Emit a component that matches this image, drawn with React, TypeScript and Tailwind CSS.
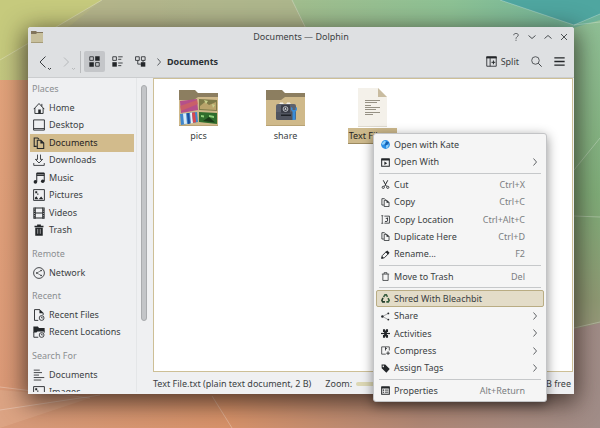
import type { ReactNode } from "react";
import clsx from "clsx";

const icons: Record<string, ReactNode> = {
  home: (
    <>
      <path d="M1 9.5 8 2l7 7.5M2.5 8v7.3h11V8M11.8 6V2.5" fill="none" stroke="currentColor" strokeWidth="1.2" />
      <path d="M7 10h3.4v5.5H7z" fill="currentColor" />
    </>
  ),
  desktop: <path d="M.8 1.2h14.4v13.6H.8zM.8 12.8h14.4" fill="none" stroke="currentColor" strokeWidth="1.2" />,
  documents: (
    <>
      <path d="M5 12.5H1.6V1.2h4.6l2 2" fill="none" stroke="currentColor" strokeWidth="1.4" />
      <path d="M5.7 4.2h4.8l3.8 3.8v7.2H5.7z" fill="none" stroke="currentColor" strokeWidth="1.4" />
      <path d="M9.8 3.6v5h5z" fill="currentColor" />
    </>
  ),
  downloads: (
    <path d="M6 .8v6.4H3.2L8 12l4.8-4.8H10V.8M1 12v3.2h14V12" fill="none" stroke="currentColor" strokeWidth="1.1" />
  ),
  music: (
    <>
      <path d="M5 13V1.5h10V12M5 4.6h10" fill="none" stroke="currentColor" strokeWidth="1.3" />
      <path d="M5 1h10v2.4H5z" fill="currentColor" />
      <circle cx="3.2" cy="13.2" r="2.4" fill="currentColor" />
      <circle cx="13" cy="12.4" r="2.4" fill="currentColor" />
    </>
  ),
  pictures: (
    <>
      <path d="M.8.8h14.4v14.4H.8z" fill="none" stroke="currentColor" strokeWidth="1.2" />
      <path d="M2.5 13.6v-2l2-2 2.6 4zM7.5 13.6l3.4-3.6 2.8 3.6z" fill="currentColor" />
      <path d="M3 3h2.6v2.6H3zM5.6 6h1.6v1.6H5.6z" fill="currentColor" />
    </>
  ),
  videos: (
    <>
      <path d="M.5.5h3.2v15H.5zM12.3.5h3.2v15h-3.2z" fill="currentColor" />
      <path d="M3 1.3h10M3 8h10M3 14.7h10" stroke="currentColor" strokeWidth="1.5" />
      <path d="M2.1 2v12.5M13.9 2v12.5" stroke="#eff0f1" strokeWidth=".9" strokeDasharray="1.3 1.7" />
    </>
  ),
  trash: (
    <>
      <path d="M2 2.3h3.5V.5h5v1.8H14v2H2zM3 5h10v10.5H3z" fill="currentColor" />
      <path d="M6.3 6.5V13M9.7 6.5V13" stroke="#eff0f1" strokeWidth=".8" />
    </>
  ),
  network: (
    <>
      <circle cx="8" cy="8" r="7.2" fill="none" stroke="currentColor" strokeWidth="1.1" />
      <path d="M10.8 4.8 5 8l5.800 3.200" fill="none" stroke="currentColor" strokeWidth=".7" />
      <circle cx="5" cy="8" r="1.1" fill="currentColor" />
      <circle cx="10.8" cy="4.8" r="1" fill="currentColor" />
      <circle cx="10.8" cy="11.2" r="1" fill="currentColor" />
    </>
  ),
  recentFiles: (
    <>
      <path d="M7 15.2H2V.8h7l4.5 4.5V8" fill="none" stroke="currentColor" strokeWidth="1.2" />
      <path d="M8.600.5v5.200h5.300z" fill="currentColor" />
      <circle cx="11.5" cy="12" r="3.200" fill="none" stroke="currentColor" strokeWidth="1.1" />
      <path d="M11.5 10.200V12H13" fill="none" stroke="currentColor" />
    </>
  ),
  recentLocations: (
    <>
      <path d="M.5.8h6l1.500 2h7.500v4.400H6L4.500 8.700h-4z" fill="currentColor" />
      <path d="M1.100 8v7H7M14.900 6v3" fill="none" stroke="currentColor" strokeWidth="1.2" />
      <circle cx="11.5" cy="12" r="3.200" fill="none" stroke="currentColor" strokeWidth="1.1" />
      <path d="M11.5 10.200V12H13" fill="none" stroke="currentColor" />
    </>
  ),
  lines: <path d="M1 1.500h8M1 4.800h11M1 8.100h7M1 11.400h14M1 14.700h10" stroke="currentColor" strokeWidth="1.1" />,
  openWith: (
    <>
      <path d="M1.200 2h13.600v12.500H1.200z" fill="none" stroke="currentColor" strokeWidth="1.8" />
      <path d="M1 1h14v3.600H1zM6 6.200l5 3.200-5 3.200z" fill="currentColor" />
    </>
  ),
  cut: (
    <>
      <path d="M4 .5l5.800 11M12 .5 6.200 11.500" stroke="currentColor" strokeWidth="1.7" />
      <circle cx="4" cy="13" r="2" fill="none" stroke="currentColor" strokeWidth="1.5" />
      <circle cx="12" cy="13" r="2" fill="none" stroke="currentColor" strokeWidth="1.5" />
    </>
  ),
  copyLocation: (
    <>
      <path d="M.5 1.200h3.500M2.300 1.200v13.600M.5 14.800h3.500" fill="none" stroke="currentColor" strokeWidth="1.2" />
      <path d="M6 2h9v12.500H6" fill="none" stroke="currentColor" strokeWidth="1.4" />
      <path d="M11.500 4.500v6.500M8.500 6h3M7 11.500h4" fill="none" stroke="currentColor" strokeWidth="1.5" />
    </>
  ),
  rename: (
    <>
      <path d="M1 15l1.200-5L9 3.200 12.800 7 6 13.800z" fill="none" stroke="currentColor" strokeWidth="1.6" />
      <path d="M8 3.500 11.200.8l4 4L12.500 8zM1 15l.8-4 3.200 3.200z" fill="currentColor" />
    </>
  ),
  trashOutline: (
    <path d="M1.500 3.700h13M5.500 3.500V1.200h5v2.300M3.300 4v11h9.400V4" fill="none" stroke="currentColor" strokeWidth="1.3" />
  ),
  recycle: (
    <>
      <path d="M4.500 5.500 7 1.500h2.500l2 3.500" fill="none" stroke="#3c5f43" strokeWidth="2.800" />
      <path d="M3.500 7 1.500 11.500 3 14h4" fill="none" stroke="#233c2b" strokeWidth="2.800" />
      <path d="M9.500 14H13l1.500-2.800L12.500 7.500" fill="none" stroke="#2f5a3a" strokeWidth="2.800" />
    </>
  ),
  share: (
    <>
      <circle cx="2.500" cy="8" r="2.200" fill="currentColor" />
      <circle cx="13" cy="2.500" r="1.700" fill="currentColor" />
      <circle cx="13" cy="13.500" r="1.700" fill="currentColor" />
      <path d="M4 7.200 12 3M4 8.800 12 13" stroke="currentColor" strokeWidth=".7" />
    </>
  ),
  activities: (
    <>
      <path d="M3.500.5h3.700v2h1.600v-2h3.700v5h-9zM3.500 10.500h9v5H8.800v-2H7.200v2H3.500z" fill="currentColor" />
      <path d="M0 8h16" stroke="currentColor" strokeWidth="2.200" />
      <path d="M8 5v6" stroke="currentColor" strokeWidth="5" />
    </>
  ),
  compress: (
    <>
      <path d="M8.500 14.500H1.200V1.500h13.600V8" fill="none" stroke="currentColor" strokeWidth="1.3" />
      <path d="M8 2v6M8 4.500h2.500M12.500 9.500v6.500M9.300 12.800h6.500" stroke="currentColor" strokeWidth="1.5" />
    </>
  ),
  tag: <path d="M1 1h6.500L15.500 9 9.500 15.500 1.200 7.500zM4 2.800a1.300 1.300 0 1 0 .1 0z" fill="currentColor" fillRule="evenodd" />,
  properties: (
    <>
      <path d="M1.200 2h13.600v12.500H1.200z" fill="none" stroke="currentColor" strokeWidth="1.8" />
      <path d="M1 1h14v3.500H1zM3.200 6.300h2.300v2H3.200zM3.200 10h2.300v2H3.200z" fill="currentColor" />
      <path d="M7 7.300h6M7 11h6" stroke="currentColor" strokeWidth="1.5" />
    </>
  ),
  kate: (
    <>
      <circle cx="8" cy="8" r="7.800" fill="#2b8fe6" />
      <path d="M1 6 6 1.200 9 3 6.500 7 3 9zM9 9l5-1-1.500 5L9 14.500z" fill="#8ed0fb" />
      <path d="M9 3l5.500 1-4 5-4 1z" fill="#175fae" />
    </>
  ),
  viewIcons: (
    <>
      <path d="M9 .5h6.500V7H9zM.5 9H7v6.500H.5z" fill="currentColor" />
      <path d="M1.100 1.100h5.300v5.300H1.100zM9.600 9.600h5.300v5.300H9.600z" fill="none" stroke="currentColor" strokeWidth="1.2" />
    </>
  ),
  viewCompact: (
    <>
      <path d="M.5 9H7v6.500H.5z" fill="currentColor" />
      <path d="M1.100 1.100h5.300v5.300H1.100zM9 1.200h6.500M9 4.800h4.500M9 10.200h6.500M9 14h4.500" fill="none" stroke="currentColor" strokeWidth="1.2" />
    </>
  ),
  viewTree: (
    <>
      <path d="M8.500 9H15v6.500H8.500z" fill="currentColor" />
      <path d="M.8 1.100h5.400v5.300H.8zM9.300 1.100h5.400v5.300H9.300zM11.700 6.500V9M4 6.500v5.300h4.500" fill="none" stroke="currentColor" strokeWidth="1.2" />
    </>
  ),
  split: (
    <>
      <path d="M1.100 1.500h13.800v13.400H1.100zM6 3v12" fill="none" stroke="currentColor" strokeWidth="1.2" />
      <path d="M.5.5h15v3H.5z" fill="currentColor" />
      <path d="M8 9.200h5.500M10.800 6.500V12" stroke="currentColor" strokeWidth="1.4" />
    </>
  ),
  search: (
    <>
      <circle cx="6.500" cy="6.500" r="5.500" fill="none" stroke="currentColor" strokeWidth="1.2" />
      <path d="m10.500 10.500 5 5" stroke="currentColor" strokeWidth="1.4" />
    </>
  ),
  hamburger: <path d="M.5 2.700h15M.5 8h15M.5 13.300h15" stroke="currentColor" strokeWidth="2" />,
  help: (
    <>
      <path d="M3.500 4.500C3.500 2 5.500.8 8 .8s4.500 1.200 4.500 3.700C12.500 7.300 8 7.500 8 11.500" fill="none" stroke="currentColor" strokeWidth="1.6" />
      <path d="M8 13.500v2" stroke="currentColor" strokeWidth="1.8" />
    </>
  ),
  down: <path d="m1 5 7 6 7-6" fill="none" stroke="currentColor" strokeWidth="1.800" />,
  up: <path d="m1 11 7-6 7 6" fill="none" stroke="currentColor" strokeWidth="1.800" />,
  close: <path d="m2 2 12 12m0-12-12 12" stroke="currentColor" strokeWidth="1.800" />,
  right: <path d="m5 1 6 7-6 7" fill="none" stroke="currentColor" strokeWidth="1.6" />,
};

function Icon({ name, className }: { name: string; className: string }) {
  return (
    <svg viewBox="0 0 16 16" className={clsx("shrink-0", className)} aria-hidden="true">
      {icons[name]}
    </svg>
  );
}

function Wallpaper() {
  return (
    <svg
      viewBox="0 0 600 428"
      preserveAspectRatio="none"
      className="absolute inset-0 -z-10 size-full"
      aria-hidden="true"
    >
      <defs>
        <linearGradient id="top" x1="0" x2="1" y1="0" y2="0">
          <stop offset="0" stopColor="#c3c77f" />
          <stop offset=".16" stopColor="#b9b98a" />
          <stop offset=".5" stopColor="#a0bd8e" />
          <stop offset=".75" stopColor="#8dc194" />
          <stop offset="1" stopColor="#6db49c" />
        </linearGradient>
        <linearGradient id="left" x1="0" x2="0" y1="0" y2="1">
          <stop offset="0" stopColor="#e2a37b" />
          <stop offset="1" stopColor="#dc9a77" />
        </linearGradient>
        <linearGradient id="right" x1="0" x2="0" y1="0" y2="1">
          <stop offset="0" stopColor="#90c096" />
          <stop offset=".5" stopColor="#7fac78" />
          <stop offset=".8" stopColor="#8f9a74" />
          <stop offset="1" stopColor="#a39a84" />
        </linearGradient>
        <linearGradient id="bottom" x1="0" x2="1" y1="0" y2="0">
          <stop offset="0" stopColor="#d79b7a" />
          <stop offset=".38" stopColor="#d8936a" />
          <stop offset=".7" stopColor="#b08876" />
          <stop offset="1" stopColor="#a18d88" />
        </linearGradient>
      </defs>
      <path d="M0 0h600v428H0z" fill="url(#bottom)" />
      <path d="M0 60h200v330H0z" fill="url(#left)" />
      <path d="M400 20h200v303L400 370z" fill="url(#right)" />
      <path d="M0 0h600v20L400 80H0z" fill="url(#top)" />
      <path d="M0 0h102L0 60z" fill="#c6ca7d" />
      <path d="M102 0h190l25 50H40z" fill="#b2b38b" opacity=".7" />
      <path d="M500 0h100v14l-26 11z" fill="#4fa6a0" />
      <path d="M0 390l90 8-90 30z" fill="#e0aa8b" opacity=".6" />
      <path
        d="M102 0 0 60M292 0l22 45M500 0l74 25 26-11M574 25l26-3M574 170l26-32M574 216l26 1M574 328l26-6M0 387l90 11M0 410l100-15M212 396l20 32"
        fill="none"
        stroke="#fff"
        strokeOpacity=".28"
      />
    </svg>
  );
}

function PlaceGroup({
  title,
  rows,
  places,
}: {
  title: string;
  rows: string;
  places: { label: string; icon: string; selected?: boolean }[];
}) {
  return (
    <section className="mb-[5px] shrink-0">
      <h2 className="flex h-5 items-center pl-1 text-[#8b8e91]">{title}</h2>
      <ul className={clsx("grid auto-rows-fr", rows)}>
        {places.map((place) => (
          <li key={place.label} className="mx-0.5 min-h-0">
            <a
              href="#"
              className={clsx(
                "flex h-full items-center gap-1 pl-[3px]",
                place.selected && "bg-[#d2bb8c] text-[#26241f]"
              )}
            >
              <Icon name={place.icon} className="size-3 text-[#232629]" />
              {place.label}
            </a>
          </li>
        ))}
      </ul>
    </section>
  );
}

function Folder({ children }: { children: ReactNode }) {
  return (
    <svg viewBox="0 0 39 36" className="h-9 w-[39px]" aria-hidden="true">
      <path d="M0 0h16l3 3h20v12H0z" fill="#8c7e60" />
      <path d="M0 10h15l4-3h20v29H0z" fill="#cfb98a" />
      <path d="M0 35h39v1H0z" fill="#b8a274" />
      {children}
    </svg>
  );
}

function PicsIcon() {
  return (
    <Folder>
      <path d="m1 11 17-2 1 11-17 3z" fill="#b5508a" />
      <path d="m20 9 18 1v11l-18-1z" fill="#7d7a48" />
      <path d="m1 24 17-2 1 10-17 3z" fill="#3f86cc" />
      <path d="m20 22 18 1v11l-18-2z" fill="#2f6d2c" />
      <path d="m1 16 17-6 1 4-17 7z" fill="#d1655b" opacity=".7" />
      <path d="m21 16 5-4 4 3 7-3v8l-16-1z" fill="#b9a46b" />
      <path d="m25 10 4 1-2 3zM33 14l3 1-2 3z" fill="#c7cf8c" />
      <path d="m4 23.600 3-.4 1 10.500-3 .4z" fill="#d7ebf7" />
      <path d="m8 23.200 2-.3 1 10.600-2 .4z" fill="#1b4d9c" />
      <path d="m11 23 2-.4 1 10.400-2 .4z" fill="#e9eef5" />
      <path d="m13 22.700 3-.4 1 10-3 .5z" fill="#d8484d" />
      <path d="m22 25 3 .5v2l-3-.5zM30 25l5 1v2l-5-1z" fill="#8fd07a" />
      <path d="m24 31 6-4 6 5.500z" fill="#1b3b1a" />
    </Folder>
  );
}

function ShareIcon() {
  return (
    <Folder>
      <path d="M14 14v-1h3v1M21 14v-1h3v1" fill="#f4f1e8" stroke="#f4f1e8" />
      <rect x="10" y="14" width="20" height="16" rx="2" fill="#5d616d" />
      <path d="M10 22h20v6a2 2 0 0 1-2 2H12a2 2 0 0 1-2-2z" fill="#50545f" />
      <rect x="15" y="15" width="9" height="8" rx="1" fill="#3a3d47" />
      <circle cx="19.500" cy="19" r="2.400" fill="none" stroke="#d9dce0" strokeWidth=".8" />
      <path d="m19.500 17.200 1.200 2.600h-2.400z" fill="#d9dce0" />
      <path d="M15 24.500h10V26H15z" fill="#1f2228" />
      <path d="M25 17v3l1.500 1.500V30h3v-8.500L31 20v-3l-1.500 1v2h-3v-2z" fill="#3b8dd8" />
    </Folder>
  );
}

function TextFileIcon() {
  return (
    <svg viewBox="0 0 29 39" className="h-[39px] w-[29px]" aria-hidden="true">
      <path d="M0 0h20l9 9v30H0z" fill="#f4f1ea" />
      <path d="M20 0v9h9z" fill="#c9bca0" />
      <path d="M0 38.500h29" stroke="#dedacf" />
      <path
        d="M7 12.500h15M7 14.500h12M7 17.500h6M7 19.500h15M7 21.500h11M7 24.500h15M7 26.500h8"
        stroke="#7d786a"
        strokeWidth=".8"
      />
    </svg>
  );
}

function FileItem({ name, icon, selected }: { name: string; icon: ReactNode; selected?: boolean }) {
  return (
    <li className="flex w-[87px] flex-col items-center">
      <div className="flex h-[41px] items-center">{icon}</div>
      <span
        className={clsx(
          "h-4 px-px leading-4",
          selected && "border-b border-[#9c8a60] bg-[#cdb98c] text-[#26241f]"
        )}
      >
        {name}
      </span>
    </li>
  );
}

type MenuEntry = { label: string; icon: string; shortcut?: string; submenu?: boolean; active?: boolean };

const menuGroups: { rows: string; entries: MenuEntry[] }[] = [
  {
    rows: "h-[35px]",
    entries: [
      { label: "Open with Kate", icon: "kate" },
      { label: "Open With", icon: "openWith", submenu: true },
    ],
  },
  {
    rows: "h-[87px]",
    entries: [
      { label: "Cut", icon: "cut", shortcut: "Ctrl+X" },
      { label: "Copy", icon: "documents", shortcut: "Ctrl+C" },
      { label: "Copy Location", icon: "copyLocation", shortcut: "Ctrl+Alt+C" },
      { label: "Duplicate Here", icon: "documents", shortcut: "Ctrl+D" },
      { label: "Rename...", icon: "rename", shortcut: "F2" },
    ],
  },
  { rows: "h-[17px]", entries: [{ label: "Move to Trash", icon: "trashOutline", shortcut: "Del" }] },
  {
    rows: "h-[87px]",
    entries: [
      { label: "Shred With Bleachbit", icon: "recycle", active: true },
      { label: "Share", icon: "share", submenu: true },
      { label: "Activities", icon: "activities", submenu: true },
      { label: "Compress", icon: "compress", submenu: true },
      { label: "Assign Tags", icon: "tag", submenu: true },
    ],
  },
  { rows: "h-[17px]", entries: [{ label: "Properties", icon: "properties", shortcut: "Alt+Return" }] },
];

function ContextMenu() {
  return (
    <div
      role="menu"
      className="absolute left-[373px] top-[133px] w-[174px] rounded-[3px] border border-[#c3c4c6] bg-[#f5f5f5] p-0.5 shadow-[0_3px_12px_rgba(0,0,0,0.45)]"
    >
      {menuGroups.map((group, i) => (
        <div key={i}>
          {i > 0 && (
            <div role="separator" className="mx-[3px] flex h-[5px] items-center">
              <div className="h-px w-full bg-[#c6c8ca]" />
            </div>
          )}
          <div className={clsx("grid auto-rows-fr", group.rows)}>
            {group.entries.map((entry) => (
              <button
                key={entry.label}
                type="button"
                role="menuitem"
                className={clsx(
                  "flex min-h-0 w-full items-center rounded-[2px] border pl-1 text-left",
                  entry.active ? "border-[#b9ac83] bg-[#e3dcc8]" : "border-transparent"
                )}
              >
                <Icon name={entry.icon} className="size-[9px] text-[#232629]" />
                <span className="ml-1 flex-1 whitespace-nowrap">{entry.label}</span>
                {entry.shortcut && <span className="mr-[18px] text-[#7b7e81]">{entry.shortcut}</span>}
                {entry.submenu && <Icon name="right" className="mr-1 size-2" />}
              </button>
            ))}
          </div>
        </div>
      ))}
    </div>
  );
}

function NavButton({ label, disabled, d }: { label: string; disabled?: boolean; d: string }) {
  return (
    <button type="button" aria-label={label} disabled={disabled} className="text-[#3b3f43] disabled:text-[#b6b9bb]">
      <svg viewBox="0 0 16 16" className="size-4" fill="none" stroke="currentColor" aria-hidden="true">
        <path d={d} />
        <path d="m11 14 1.500 1.500L14 14" />
      </svg>
    </button>
  );
}

export default function App() {
  return (
    <div className="relative isolate flex h-screen overflow-hidden pb-[34px] pl-7 pr-[26px] pt-[27px] font-['Noto_Sans',sans-serif] text-[9px] leading-4 text-[#3b3f43]">
      <Wallpaper />
      <main className="flex min-w-0 flex-1 flex-col rounded-t-[3px] bg-[#eff0f2] shadow-[0_6px_24px_3px_rgba(30,20,15,0.7)]">
        <header className="rounded-t-[3px] border-b border-[#cbcdcf] bg-[#dee0e2] pb-px">
          <div className="grid h-5 grid-cols-[1fr_auto_1fr] items-center px-0.5">
            <svg viewBox="0 0 12 12" className="ml-px size-3" aria-hidden="true">
              <path d="M0 0h5l1 1h6v5H0z" fill="#82755c" />
              <path d="M0 3h5l1-1h6v10H0z" fill="#c8c09d" />
              <path d="M0 11h12v1H0z" fill="#a69c78" />
            </svg>
            <h1>Documents — Dolphin</h1>
            <div className="flex justify-end">
              {["help", "down", "up", "close"].map((name) => (
                <button key={name} type="button" aria-label={name} className="flex w-4 justify-center">
                  <Icon name={name} className="size-2" />
                </button>
              ))}
            </div>
          </div>
          <div className="flex h-[29px] items-center px-[9px]">
            <div className="flex gap-2">
              <NavButton label="Back" d="M8.500 2.500 3 8l5.500 5.500" />
              <NavButton label="Forward" disabled d="M3 3.500 7.500 8 3 12.500" />
            </div>
            <div className="mx-[3px] h-[22px] w-px bg-[#b9bbbd]" />
            <div className="flex gap-0.5">
              <button type="button" aria-label="Icons" className="flex size-[21px] items-center justify-center rounded-[2px] bg-[#c4c6c9]">
                <Icon name="viewIcons" className="size-[11px] text-[#232629]" />
              </button>
              <button type="button" aria-label="Compact" className="flex size-[21px] items-center justify-center">
                <Icon name="viewCompact" className="size-[11px] text-[#232629]" />
              </button>
              <button type="button" aria-label="Details" className="flex size-[21px] items-center justify-center">
                <Icon name="viewTree" className="size-[11px] text-[#232629]" />
              </button>
            </div>
            <nav className="ml-1 flex items-center gap-1">
              <Icon name="right" className="size-2" />
              <a href="#" className="font-bold text-[#2c3034]">
                Documents
              </a>
            </nav>
            <div className="ml-auto flex items-center gap-3">
              <button type="button" className="flex items-center gap-1">
                <Icon name="split" className="size-[11px] text-[#232629]" />
                Split
              </button>
              <button type="button" aria-label="Search">
                <Icon name="search" className="size-[11px]" />
              </button>
              <button type="button" aria-label="Menu">
                <Icon name="hamburger" className="size-[11px] text-[#232629]" />
              </button>
            </div>
          </div>
        </header>

        <div className="flex min-h-0 flex-1">
          <aside className="flex w-[125px] shrink-0 pb-0.5">
            <div className="flex w-[109px] flex-col overflow-hidden border-r border-[#e4e6e8] pt-px">
              <PlaceGroup
                title="Places"
                rows="h-[140px]"
                places={[
                  { label: "Home", icon: "home" },
                  { label: "Desktop", icon: "desktop" },
                  { label: "Documents", icon: "documents", selected: true },
                  { label: "Downloads", icon: "downloads" },
                  { label: "Music", icon: "music" },
                  { label: "Pictures", icon: "pictures" },
                  { label: "Videos", icon: "videos" },
                  { label: "Trash", icon: "trash" },
                ]}
              />
              <PlaceGroup title="Remote" rows="h-[17px]" places={[{ label: "Network", icon: "network" }]} />
              <PlaceGroup
                title="Recent"
                rows="h-[35px]"
                places={[
                  { label: "Recent Files", icon: "recentFiles" },
                  { label: "Recent Locations", icon: "recentLocations" },
                ]}
              />
              <PlaceGroup
                title="Search For"
                rows="h-[35px]"
                places={[
                  { label: "Documents", icon: "lines" },
                  { label: "Images", icon: "pictures" },
                ]}
              />
            </div>
            <div className="flex-1 pb-1 pl-1 pt-[7px]">
              <div className="h-[78%] w-1.5 rounded-full border border-[#a9abae] bg-[#c3c5c8]" />
            </div>
          </aside>

          <div className="flex min-w-0 flex-1 flex-col pr-px">
            <ul className="flex min-h-0 flex-1 items-start overflow-hidden border border-[#cdbf96] bg-white pl-px pt-2">
              <FileItem name="pics" icon={<PicsIcon />} />
              <FileItem name="share" icon={<ShareIcon />} />
              <FileItem name="Text File.txt" icon={<TextFileIcon />} selected />
            </ul>
            <footer className="flex h-[22px] items-center pr-0.5 pt-px">
              <p className="whitespace-nowrap">Text File.txt (plain text document, 2 B)</p>
              <label htmlFor="zoom" className="ml-3.5 mr-1">
                Zoom:
              </label>
              <input
                id="zoom"
                type="range"
                defaultValue={50}
                className="h-1 w-24 appearance-none rounded-full bg-[#dcd7b4] [&::-webkit-slider-thumb]:size-2 [&::-webkit-slider-thumb]:appearance-none [&::-webkit-slider-thumb]:rounded-full [&::-webkit-slider-thumb]:bg-white"
              />
              <p className="ml-auto whitespace-nowrap">34.2 GiB free</p>
            </footer>
          </div>
        </div>
      </main>
      <ContextMenu />
    </div>
  );
}
